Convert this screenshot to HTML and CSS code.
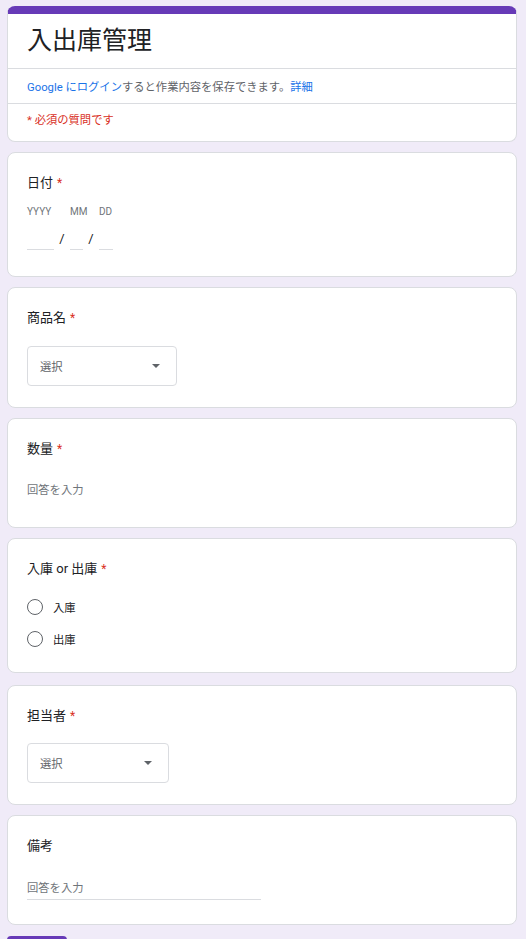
FILE: index.html
```html
<!DOCTYPE html>
<html lang="ja">
<head>
<meta charset="utf-8">
<title>入出庫管理</title>
<link rel="stylesheet" href="styles.css">
</head>
<body>
<div class="page">
  <div class="card header">
    <div class="title">入出庫管理</div>
    <div class="login"><span class="link">Google にログイン</span>すると作業内容を保存できます。<span class="link">詳細</span></div>
    <div class="required-note">* 必須の質問です</div>
  </div>

  <div class="card q-date">
    <div class="qlabel">日付<span class="req">*</span></div>
    <div class="date">
      <div class="dl c1">YYYY</div>
      <div class="dl c3">MM</div>
      <div class="dl c5">DD</div>
      <div class="din c1"></div>
      <div class="slash c2">/</div>
      <div class="din c3"></div>
      <div class="slash c4">/</div>
      <div class="din c5"></div>
    </div>
  </div>

  <div class="card q-select">
    <div class="qlabel">商品名<span class="req">*</span></div>
    <div class="select wide"><span>選択</span><span class="arrow"></span></div>
  </div>

  <div class="card q-text">
    <div class="qlabel">数量<span class="req">*</span></div>
    <div class="placeholder">回答を入力</div>
  </div>

  <div class="card q-radio">
    <div class="qlabel">入庫 or 出庫<span class="req">*</span></div>
    <div class="radios">
      <div class="radio"><span class="circle"></span><span>入庫</span></div>
      <div class="radio"><span class="circle"></span><span>出庫</span></div>
    </div>
  </div>

  <div class="card q-select2">
    <div class="qlabel">担当者<span class="req">*</span></div>
    <div class="select narrow"><span>選択</span><span class="arrow"></span></div>
  </div>

  <div class="card q-note">
    <div class="qlabel">備考</div>
    <div class="line-input">回答を入力</div>
  </div>

  <div class="submit"></div>
</div>
</body>
</html>
```
FILE: styles.css
```css
html, body {
  margin: 0;
  padding: 0;
  background: #f0ebf8;
}
body {
  font-family: Roboto, "Noto Sans CJK JP", sans-serif;
  color: #202124;
  height: 939px;
  overflow: hidden;
}
.page {
  padding: 6px 9px 0 7px;
  display: flex;
  flex-direction: column;
  gap: 10px;
}
.card {
  background: #fff;
  border: 1px solid #dadce0;
  border-radius: 8px;
  box-sizing: border-box;
  padding: 20px 19px 0 19px;
}
.header {
  border-top: 8px solid #673ab7;
  padding: 0;
  height: 136px;
}
.title {
  font-size: 25px;
  line-height: 32px;
  padding: 11px 19px 11px;
  border-bottom: 1px solid #dadce0;
}
.login {
  font-size: 11.3px;
  line-height: 18px;
  padding: 10px 19px 6px;
  color: #5f6368;
  border-bottom: 1px solid #dadce0;
}
.link { color: #1a73e8; }
.required-note {
  font-size: 11.3px;
  line-height: 18px;
  padding: 8px 19px 10px;
  color: #d93025;
}
.qlabel {
  font-size: 13px;
  line-height: 20px;
  height: 20px;
  color: #202124;
}
.req {
  color: #d93025;
  margin-left: 4px;
  font-size: 12px;
}
.q-date { height: 125px; }
.date {
  display: grid;
  grid-template-columns: 27px 16px 13px 16px 14px;
  grid-template-rows: 14px 22px;
  row-gap: 9px;
  margin-top: 12px;
}
.dl {
  grid-row: 1;
  font-size: 10px;
  line-height: 14px;
  color: #70757a;
  white-space: nowrap;
}
.din {
  grid-row: 2;
  border-bottom: 1px solid #dadce0;
}
.slash {
  grid-row: 2;
  font-size: 13px;
  line-height: 21px;
  text-align: center;
  color: #202124;
}
.c1 { grid-column: 1; }
.c2 { grid-column: 2; }
.c3 { grid-column: 3; }
.c4 { grid-column: 4; }
.c5 { grid-column: 5; }

.q-select { height: 121px; }
.select {
  margin-top: 18px;
  height: 40px;
  box-sizing: border-box;
  border: 1px solid #dadce0;
  border-radius: 4px;
  display: flex;
  align-items: center;
  justify-content: space-between;
  padding: 0 16px 0 12px;
  font-size: 11.3px;
  color: #5f6368;
}
.select.wide { width: 150px; }
.select.narrow { width: 142px; margin-top: 17px; }
.arrow {
  width: 0;
  height: 0;
  border-left: 4px solid transparent;
  border-right: 4px solid transparent;
  border-top: 4px solid #5f6368;
}
.q-text { height: 110px; }
.placeholder {
  margin-top: 23px;
  font-size: 11.3px;
  line-height: 18px;
  color: #70757a;
}
.q-radio { height: 135px; margin-bottom: 2px; }
.radios {
  margin-top: 16px;
  display: flex;
  flex-direction: column;
  gap: 8px;
}
.radio {
  height: 24px;
  display: flex;
  align-items: center;
  gap: 10px;
  font-size: 11.3px;
  color: #202124;
}
.circle {
  width: 16px;
  height: 16px;
  box-sizing: border-box;
  border: 1.5px solid #5f6368;
  border-radius: 50%;
}
.q-select2 { height: 120px; }
.q-note { height: 110px; }
.line-input {
  margin-top: 23px;
  width: 234px;
  font-size: 11.3px;
  line-height: 20px;
  color: #70757a;
  border-bottom: 1px solid #dadce0;
}
.submit {
  width: 60px;
  height: 20px;
  background: #673ab7;
  border-radius: 4px;
  margin-top: 1px;
}
```
